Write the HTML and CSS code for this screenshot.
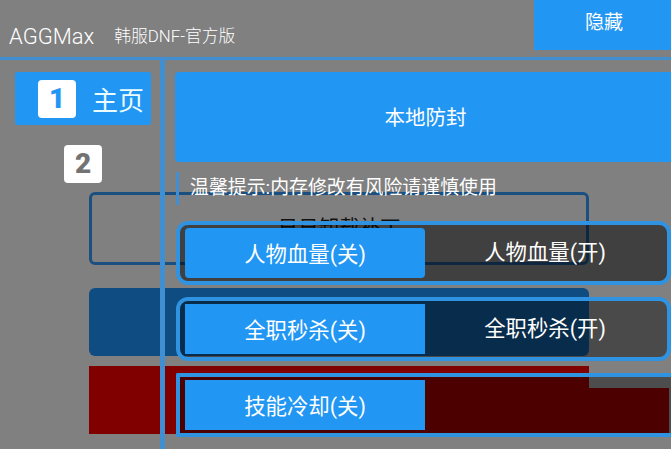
FILE: index.html
```html
<!DOCTYPE html>
<html>
  <head>
    <meta charset="utf-8">
    <title>AGGMax</title>
    <link rel="stylesheet" href="styles.css">
  </head>
  <body>
    <div class="back">
      <div class="card card-outline">日日卸载补丁</div>
      <div class="card card-blue"></div>
      <div class="card card-red"></div>
      <div class="card-tail"></div>
    </div>
    <div class="header">
      <span class="logo">AGGMax</span>
      <span class="subtitle">韩服DNF-官方版</span>
      <div class="hide">隐藏</div>
    </div>
    <div class="main">
      <div class="side">
        <div class="tab tab-on">
          <span class="num num-blue">1</span>
          <span class="tab-name">主页</span>
        </div>
        <div class="tab">
          <span class="num num-grey">2</span>
        </div>
      </div>
      <div class="content">
        <div class="banner">本地防封</div>
        <div class="tip">温馨提示:内存修改有风险请谨慎使用</div>
        <div class="row row-a">
          <div class="btn btn-round">人物血量(关)</div>
          <div class="off">人物血量(开)</div>
        </div>
        <div class="row row-b">
          <div class="btn">全职秒杀(关)</div>
          <div class="off">全职秒杀(开)</div>
        </div>
        <div class="row row-c">
          <div class="btn">技能冷却(关)</div>
        </div>
      </div>
    </div>
  </body>
</html>
```

FILE: styles.css
```css
html, body {
  margin: 0;
  height: 100%;
}

body {
  position: relative;
  width: 671px;
  height: 449px;
  overflow: hidden;
  background-color: #808080;
  color: #fff;
  font-family: "Roboto", "Noto Sans CJK SC", sans-serif;
}

/* cards of the page below, they show through the overlay */
.back {
  position: absolute;
  left: 89px;
  top: 192px;
  width: 500px;
}

.card {
  box-sizing: border-box;
  width: 500px;
  border-radius: 6px;
}

.card-outline {
  height: 73px;
  border: 3px solid #1a4f80;
  color: #111;
  font-size: 20.5px;
  line-height: 66px;
  text-align: center;
}

.card-blue {
  height: 68px;
  margin-top: 23px;
  background-color: #0f4c81;
}

.card-red {
  height: 68px;
  margin-top: 10px;
  background-color: #800000;
  border-radius: 0;
}

.card-tail {
  position: absolute;
  left: 500px;
  top: 196px;
  width: 80px;
  height: 46px;
  background-color: #800000;
}

.header {
  position: relative;
  display: flex;
  align-items: flex-start;
  box-sizing: border-box;
  height: 60px;
  border-bottom: 3px solid #3f8fd2;
}

.logo {
  margin: 24px 0 0 9px;
  font-size: 22px;
  font-weight: 300;
  line-height: 26px;
}

.subtitle {
  margin: 25px 0 0 20px;
  font-size: 16.8px;
  font-weight: 300;
  line-height: 22px;
}

.hide {
  box-sizing: border-box;
  width: 137px;
  height: 50px;
  margin-left: auto;
  padding-left: 3px;
  background-color: #2196f3;
  font-size: 19px;
  line-height: 46px;
  text-align: center;
}

.main {
  position: relative;
  display: flex;
  height: 389px;
}

.side {
  box-sizing: border-box;
  width: 165px;
  padding: 12px 9px 0 15px;
  border-right: 5px solid #3f8fd2;
}

.tab {
  display: flex;
  align-items: center;
  height: 53px;
  padding-left: 23px;
}

.tab + .tab {
  height: 38px;
  margin-top: 20px;
  padding-left: 49px;
}

.tab-on {
  width: 136px;
  box-sizing: border-box;
  background-color: #2196f3;
  border-radius: 3px;
}

.num {
  width: 38px;
  height: 38px;
  border-radius: 4px;
  background-color: #fff;
  font-size: 28px;
  font-weight: 900;
  line-height: 38px;
  text-align: center;
}

.num-blue {
  color: #2196f3;
}

.num-grey {
  color: #737373;
}

.tab-name {
  margin-left: 16px;
  font-size: 26px;
  color: #eafcff;
}

.content {
  flex: 1;
  padding: 12px 0 0 10px;
}

.banner {
  height: 90px;
  background-color: #2196f3;
  border-radius: 4px 0 0 4px;
  font-size: 20.5px;
  line-height: 92px;
  text-align: center;
}

.tip {
  height: 33px;
  margin: 10px 0 16px 1px;
  padding-left: 11px;
  border-left: 3px solid #3f8fd2;
  font-size: 18.9px;
  line-height: 32px;
  white-space: nowrap;
}

.row {
  display: flex;
  align-items: center;
  box-sizing: border-box;
  width: 495px;
  height: 64px;
  margin: 0 0 12px 1px;
  padding-left: 5px;
  border: 4px solid #2f93e2;
  border-radius: 12px;
}

.row-a {
  background-color: rgba(0, 0, 0, 0.5);
}

.row-b {
  background-color: rgba(0, 0, 0, 0.42);
}

.row-c {
  width: 500px;
  background-color: rgba(0, 0, 0, 0.4);
  border-right: none;
  border-radius: 2px 0 0 2px;
}

.btn {
  flex: none;
  width: 240px;
  height: 50px;
  background-color: #2196f3;
  font-size: 21.4px;
  line-height: 54px;
  text-align: center;
}

.btn-round {
  border-radius: 4px;
}

.off {
  flex: none;
  width: 240px;
  font-size: 21.4px;
  line-height: 54px;
  text-align: center;
}
```
